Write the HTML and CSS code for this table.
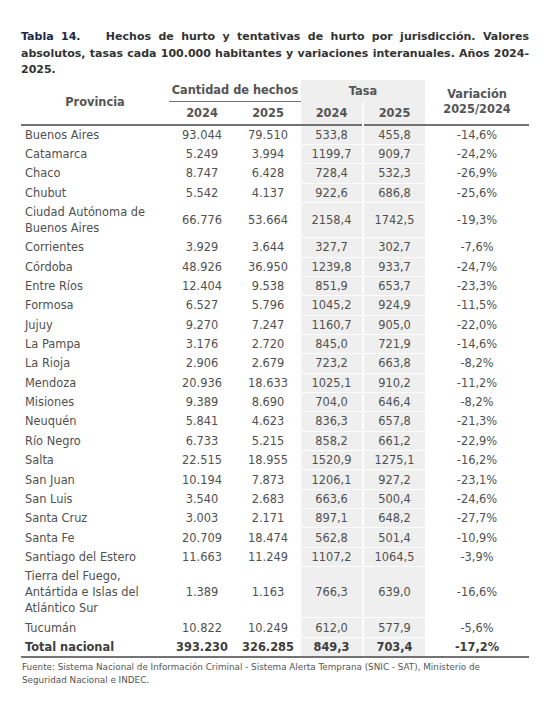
FILE: index.html
```html
<!DOCTYPE html>
<html lang="es">

<head>
  <meta charset="UTF-8">
  <meta name="viewport" content="width=device-width, initial-scale=1.0">
  <title>Tabla 14</title>
  <link rel="stylesheet" href="styles.css">
</head>

<body>
  <div class="page">
    <p class="caption">
      <span class="line"><span class="tag">Tabla 14.</span> Hechos de hurto y tentativas de hurto por jurisdicción. Valores</span>
      <span class="line">absolutos, tasas cada 100.000 habitantes y variaciones interanuales. Años 2024-</span>
      <span class="line last">2025.</span>
    </p>

    <table class="data">
      <colgroup>
        <col class="c-prov">
        <col class="c-num">
        <col class="c-num">
        <col class="c-rate">
        <col class="c-rate">
        <col class="c-var">
      </colgroup>
      <thead>
        <tr>
          <th rowspan="2">Provincia</th>
          <th colspan="2" class="group">Cantidad de hechos</th>
          <th colspan="2" class="rate">Tasa</th>
          <th rowspan="2">Variación<br>2025/2024</th>
        </tr>
        <tr class="years">
          <th>2024</th>
          <th>2025</th>
          <th class="rate">2024</th>
          <th class="rate split">2025</th>
        </tr>
      </thead>
      <tbody>
        <tr><td>Buenos Aires</td><td>93.044</td><td>79.510</td><td class="rate">533,8</td><td class="rate split">455,8</td><td>-14,6%</td></tr>
        <tr><td>Catamarca</td><td>5.249</td><td>3.994</td><td class="rate">1199,7</td><td class="rate split">909,7</td><td>-24,2%</td></tr>
        <tr><td>Chaco</td><td>8.747</td><td>6.428</td><td class="rate">728,4</td><td class="rate split">532,3</td><td>-26,9%</td></tr>
        <tr><td>Chubut</td><td>5.542</td><td>4.137</td><td class="rate">922,6</td><td class="rate split">686,8</td><td>-25,6%</td></tr>
        <tr><td>Ciudad Autónoma de<br>Buenos Aires</td><td>66.776</td><td>53.664</td><td class="rate">2158,4</td><td class="rate split">1742,5</td><td>-19,3%</td></tr>
        <tr><td>Corrientes</td><td>3.929</td><td>3.644</td><td class="rate">327,7</td><td class="rate split">302,7</td><td>-7,6%</td></tr>
        <tr><td>Córdoba</td><td>48.926</td><td>36.950</td><td class="rate">1239,8</td><td class="rate split">933,7</td><td>-24,7%</td></tr>
        <tr><td>Entre Ríos</td><td>12.404</td><td>9.538</td><td class="rate">851,9</td><td class="rate split">653,7</td><td>-23,3%</td></tr>
        <tr><td>Formosa</td><td>6.527</td><td>5.796</td><td class="rate">1045,2</td><td class="rate split">924,9</td><td>-11,5%</td></tr>
        <tr><td>Jujuy</td><td>9.270</td><td>7.247</td><td class="rate">1160,7</td><td class="rate split">905,0</td><td>-22,0%</td></tr>
        <tr><td>La Pampa</td><td>3.176</td><td>2.720</td><td class="rate">845,0</td><td class="rate split">721,9</td><td>-14,6%</td></tr>
        <tr><td>La Rioja</td><td>2.906</td><td>2.679</td><td class="rate">723,2</td><td class="rate split">663,8</td><td>-8,2%</td></tr>
        <tr><td>Mendoza</td><td>20.936</td><td>18.633</td><td class="rate">1025,1</td><td class="rate split">910,2</td><td>-11,2%</td></tr>
        <tr><td>Misiones</td><td>9.389</td><td>8.690</td><td class="rate">704,0</td><td class="rate split">646,4</td><td>-8,2%</td></tr>
        <tr><td>Neuquén</td><td>5.841</td><td>4.623</td><td class="rate">836,3</td><td class="rate split">657,8</td><td>-21,3%</td></tr>
        <tr><td>Río Negro</td><td>6.733</td><td>5.215</td><td class="rate">858,2</td><td class="rate split">661,2</td><td>-22,9%</td></tr>
        <tr><td>Salta</td><td>22.515</td><td>18.955</td><td class="rate">1520,9</td><td class="rate split">1275,1</td><td>-16,2%</td></tr>
        <tr><td>San Juan</td><td>10.194</td><td>7.873</td><td class="rate">1206,1</td><td class="rate split">927,2</td><td>-23,1%</td></tr>
        <tr><td>San Luis</td><td>3.540</td><td>2.683</td><td class="rate">663,6</td><td class="rate split">500,4</td><td>-24,6%</td></tr>
        <tr><td>Santa Cruz</td><td>3.003</td><td>2.171</td><td class="rate">897,1</td><td class="rate split">648,2</td><td>-27,7%</td></tr>
        <tr><td>Santa Fe</td><td>20.709</td><td>18.474</td><td class="rate">562,8</td><td class="rate split">501,4</td><td>-10,9%</td></tr>
        <tr><td>Santiago del Estero</td><td>11.663</td><td>11.249</td><td class="rate">1107,2</td><td class="rate split">1064,5</td><td>-3,9%</td></tr>
        <tr><td>Tierra del Fuego,<br>Antártida e Islas del<br>Atlántico Sur</td><td>1.389</td><td>1.163</td><td class="rate">766,3</td><td class="rate split">639,0</td><td>-16,6%</td></tr>
        <tr><td>Tucumán</td><td>10.822</td><td>10.249</td><td class="rate">612,0</td><td class="rate split">577,9</td><td>-5,6%</td></tr>
        <tr class="total"><td>Total nacional</td><td>393.230</td><td>326.285</td><td class="rate">849,3</td><td class="rate split">703,4</td><td>-17,2%</td></tr>
      </tbody>
    </table>

    <p class="source">Fuente: Sistema Nacional de Información Criminal - Sistema Alerta Temprana (SNIC - SAT), Ministerio de<br>Seguridad Nacional e INDEC.</p>
  </div>
</body>

</html>
```

FILE: styles.css
```css
* {
  box-sizing: border-box;
}

:root {
  --text: #505050;
  --head: #555;
  --title: #333;
  --navy: #1d2747;
  --shade: #efefef;
  --rule: #737373;
}

body {
  margin: 0;
  background: #fff;
  font-family: 'DejaVu Sans', 'Noto Sans', sans-serif;
  color: var(--text);
}

.page {
  width: 508px;
  margin-left: 21px;
  padding-top: 29px;
}

/* caption */

.caption {
  margin: 0 0 1px;
  font-size: 11px;
  font-weight: bold;
  line-height: 16.5px;
  color: var(--title);
}

.caption .line {
  display: block;
  white-space: nowrap;
  text-align: justify;
  text-align-last: justify;
}

.caption .line.last {
  text-align-last: left;
}

.caption .tag {
  color: var(--navy);
  margin-right: 18px;
}

/* table */

.data {
  width: 508px;
  border-collapse: collapse;
  table-layout: fixed;
  font-size: 11.4px;
}

.c-prov { width: 148px; }
.c-num { width: 66px; }
.c-rate { width: 62px; }
.c-var { width: 104px; }

.data th {
  font-weight: bold;
  color: var(--head);
  font-size: 11.4px;
  line-height: 15px;
  padding: 0;
  text-align: center;
  vertical-align: middle;
}

.data thead tr:first-child th {
  height: 22px;
  padding-top: 1px;
}

.data .group {
  border-bottom: 1px solid var(--rule);
}

.data .years th {
  height: 23px;
  padding-top: 1px;
}

.data thead {
  border-bottom: 2px solid var(--rule);
}

.data td {
  padding: 1.18px 0;
  line-height: 16px;
  text-align: center;
  vertical-align: middle;
  border-bottom: 1px solid #fff;
  font-weight: normal;
}

.data td:first-child {
  text-align: left;
  padding-left: 4px;
}

.rate {
  background: var(--shade);
}

.split {
  border-left: 2px solid #fff;
}

.data .total td {
  font-weight: bold;
  color: #3d3d3d;
  border-bottom: 2px solid var(--rule);
}

/* source */

.source {
  margin: 3px 0 0 1px;
  font-size: 8.8px;
  line-height: 12.5px;
  color: #555;
}
```
